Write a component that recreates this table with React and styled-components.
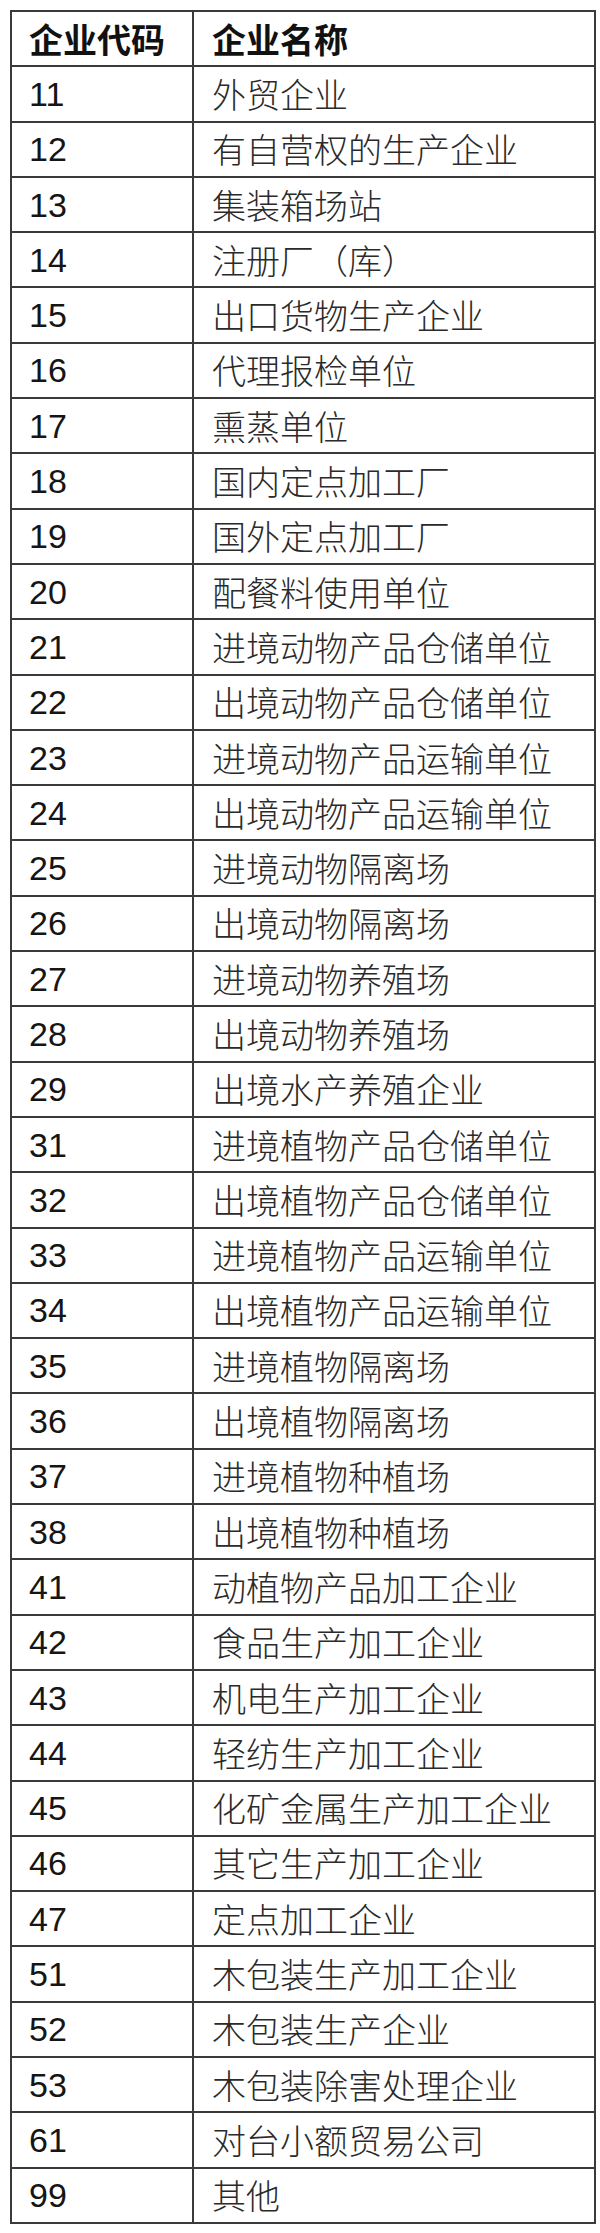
import React from 'react';
import styled, { createGlobalStyle } from 'styled-components';

const GlobalStyle = createGlobalStyle`
  html, body {
    margin: 0;
    padding: 0;
    background: #ffffff;
  }
`;

const Page = styled.div`
  padding: 10px 4px 10px 10px;
  font-family: "Liberation Sans", "Noto Sans CJK SC", sans-serif;
`;

const Table = styled.div`
  border: 2px solid #3a3a3a;
  border-bottom: none;
`;

const Row = styled.div`
  display: grid;
  grid-template-columns: 182px 1fr;
  height: 55.3px;
  box-sizing: border-box;
  border-bottom: 2px solid #3a3a3a;
`;

const Cell = styled.div`
  display: flex;
  align-items: center;
  padding-left: ${(p) => (p.$code ? '17px' : '18px')};
  font-size: 34px;
  line-height: 1;
  white-space: nowrap;
  color: ${(p) => (p.$head ? '#111' : p.$code ? '#151515' : '#2a2a2a')};
  font-weight: ${(p) => (p.$head ? 700 : p.$code ? 400 : 300)};
  font-family: ${(p) =>
    p.$code && !p.$head
      ? '"Liberation Sans", Arial, sans-serif'
      : '"Noto Sans CJK SC", "Liberation Sans", sans-serif'};
  border-right: ${(p) => (p.$code ? '2px solid #3a3a3a' : 'none')};
`;

const rows = [
  ['11', '外贸企业'],
  ['12', '有自营权的生产企业'],
  ['13', '集装箱场站'],
  ['14', '注册厂（库）'],
  ['15', '出口货物生产企业'],
  ['16', '代理报检单位'],
  ['17', '熏蒸单位'],
  ['18', '国内定点加工厂'],
  ['19', '国外定点加工厂'],
  ['20', '配餐料使用单位'],
  ['21', '进境动物产品仓储单位'],
  ['22', '出境动物产品仓储单位'],
  ['23', '进境动物产品运输单位'],
  ['24', '出境动物产品运输单位'],
  ['25', '进境动物隔离场'],
  ['26', '出境动物隔离场'],
  ['27', '进境动物养殖场'],
  ['28', '出境动物养殖场'],
  ['29', '出境水产养殖企业'],
  ['31', '进境植物产品仓储单位'],
  ['32', '出境植物产品仓储单位'],
  ['33', '进境植物产品运输单位'],
  ['34', '出境植物产品运输单位'],
  ['35', '进境植物隔离场'],
  ['36', '出境植物隔离场'],
  ['37', '进境植物种植场'],
  ['38', '出境植物种植场'],
  ['41', '动植物产品加工企业'],
  ['42', '食品生产加工企业'],
  ['43', '机电生产加工企业'],
  ['44', '轻纺生产加工企业'],
  ['45', '化矿金属生产加工企业'],
  ['46', '其它生产加工企业'],
  ['47', '定点加工企业'],
  ['51', '木包装生产加工企业'],
  ['52', '木包装生产企业'],
  ['53', '木包装除害处理企业'],
  ['61', '对台小额贸易公司'],
  ['99', '其他'],
];

export default function App() {
  return (
    <>
      <GlobalStyle />
      <Page>
        <Table>
          <Row>
            <Cell $code $head>企业代码</Cell>
            <Cell $head>企业名称</Cell>
          </Row>
          {rows.map(([code, name]) => (
            <Row key={code}>
              <Cell $code>{code}</Cell>
              <Cell>{name}</Cell>
            </Row>
          ))}
        </Table>
      </Page>
    </>
  );
}
